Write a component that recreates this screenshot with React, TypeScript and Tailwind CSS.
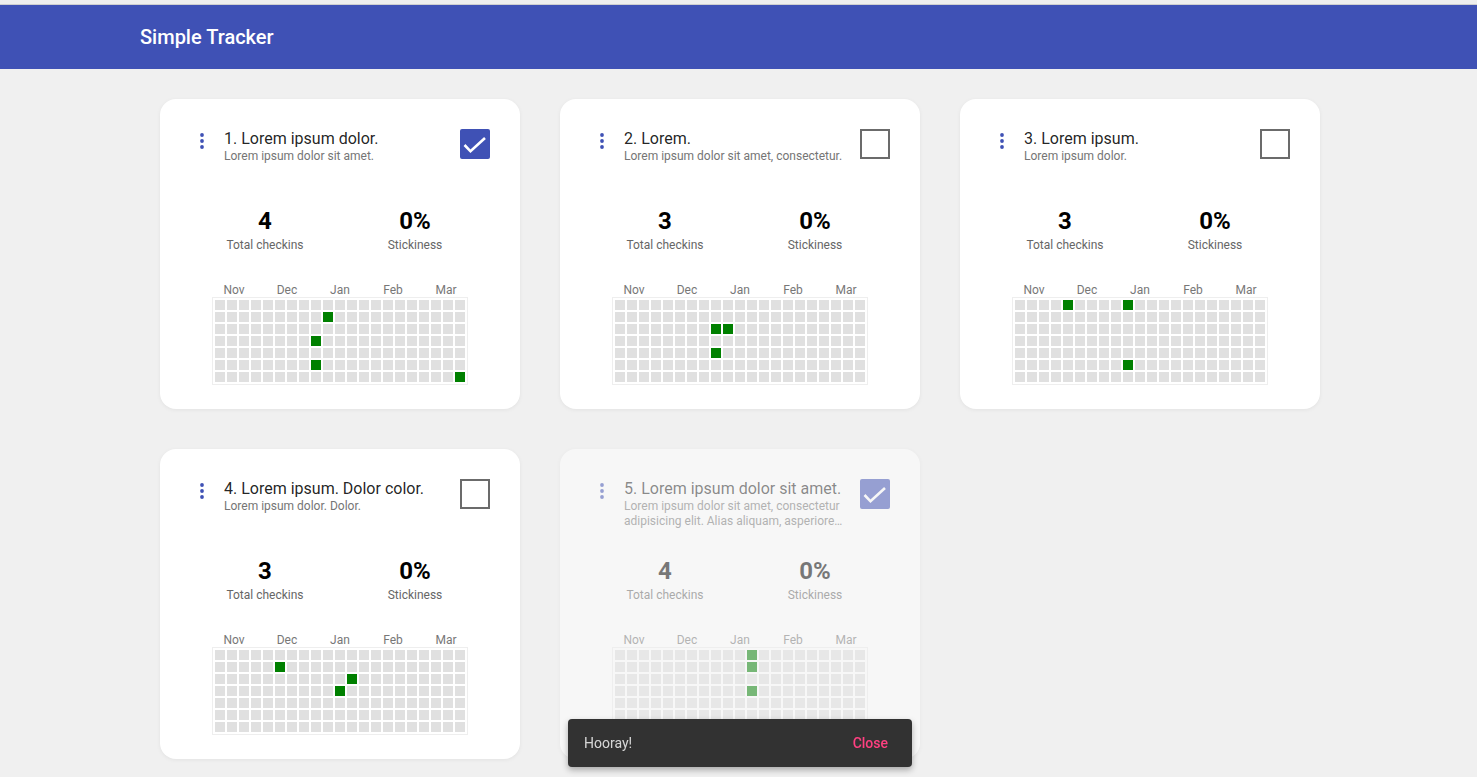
const font = { fontFamily: "Roboto, 'Noto Sans', sans-serif" };

type Habit = {
  id: number;
  title: string;
  subtitle: string;
  checked: boolean;
  total: number;
  stickiness: string;
  done: [number, number][];
  faded?: boolean;
};

const habits: Habit[] = [
  {
    id: 1,
    title: "1. Lorem ipsum dolor.",
    subtitle: "Lorem ipsum dolor sit amet.",
    checked: true,
    total: 4,
    stickiness: "0%",
    done: [
      [9, 1],
      [8, 3],
      [8, 5],
      [20, 6],
    ],
  },
  {
    id: 2,
    title: "2. Lorem.",
    subtitle: "Lorem ipsum dolor sit amet, consectetur.",
    checked: false,
    total: 3,
    stickiness: "0%",
    done: [
      [8, 2],
      [9, 2],
      [8, 4],
    ],
  },
  {
    id: 3,
    title: "3. Lorem ipsum.",
    subtitle: "Lorem ipsum dolor.",
    checked: false,
    total: 3,
    stickiness: "0%",
    done: [
      [4, 0],
      [9, 0],
      [9, 5],
    ],
  },
  {
    id: 4,
    title: "4. Lorem ipsum. Dolor color.",
    subtitle: "Lorem ipsum dolor. Dolor.",
    checked: false,
    total: 3,
    stickiness: "0%",
    done: [
      [5, 1],
      [11, 2],
      [10, 3],
    ],
  },
  {
    id: 5,
    title: "5. Lorem ipsum dolor sit amet.",
    subtitle:
      "Lorem ipsum dolor sit amet, consectetur adipisicing elit. Alias aliquam, asperiores commodi dolorum.",
    checked: true,
    total: 4,
    stickiness: "0%",
    faded: true,
    done: [
      [11, 0],
      [11, 1],
      [11, 3],
    ],
  },
];

const months = ["Nov", "Dec", "Jan", "Feb", "Mar"];

const MoreVert = () => (
  <svg width="8" height="24" viewBox="0 0 8 24" className="ml-[8px]">
    <circle cx="4" cy="6" r="1.9" fill="#3f51b5" />
    <circle cx="4" cy="12" r="1.9" fill="#3f51b5" />
    <circle cx="4" cy="18" r="1.9" fill="#3f51b5" />
  </svg>
);

const Checkbox = ({ checked }: { checked: boolean }) =>
  checked ? (
    <div className="h-[30px] w-[30px] shrink-0 rounded-[2px] bg-[#3f51b5]">
      <svg width="30" height="30" viewBox="0 0 30 30">
        <polyline
          points="4.5,16 10.5,22.3 25,9"
          fill="none"
          stroke="white"
          strokeWidth="2.6"
        />
      </svg>
    </div>
  ) : (
    <div className="h-[30px] w-[30px] shrink-0 border-2 border-[#6b6b6b]" />
  );

const Heatmap = ({ done }: { done: [number, number][] }) => {
  const cells = [];
  for (let c = 0; c < 21; c++) {
    for (let r = 0; r < 7; r++) {
      const on = done.some(([dc, dr]) => dc === c && dr === r);
      cells.push(
        <div
          key={`${c}-${r}`}
          className={on ? "h-[10px] w-[10px] bg-[#008000]" : "h-[10px] w-[10px] bg-[#e0e0e0]"}
        />
      );
    }
  }
  return (
    <div className="flex flex-col items-center">
      <div className="flex w-[256px] text-[12px] leading-[14px] text-[#777]">
        {months.map((m) => (
          <div key={m} className="w-[53px] shrink-0 text-center first:ml-[-4.5px]">
            {m}
          </div>
        ))}
      </div>
      <div className="border border-[#eeeeee] p-[2px]">
        <div className="grid grid-flow-col grid-rows-[repeat(7,10px)] auto-cols-[10px] gap-[2px]">
          {cells}
        </div>
      </div>
    </div>
  );
};

const HabitCard = ({ habit }: { habit: Habit }) => (
  <div
    className={`h-[310px] w-[360px] rounded-[16px] bg-white px-[30px] pt-[30px] shadow-[0_1px_4px_rgba(0,0,0,0.06)] ${
      habit.faded ? "opacity-50" : ""
    }`}
  >
    <div className="flex h-[60px] items-start">
      <div className="w-[34px] shrink-0">
        <MoreVert />
      </div>
      <div className="min-w-0 flex-1 pr-[14px]">
        <div className="text-[16px] leading-[20px] text-[rgba(0,0,0,0.87)]">{habit.title}</div>
        <div className="line-clamp-2 text-[12px] leading-[15px] text-[#757575]">
          {habit.subtitle}
        </div>
      </div>
      <Checkbox checked={habit.checked} />
    </div>
    <div className="mt-[18px] flex justify-center">
      <div className="w-[150px] text-center">
        <div className="text-[24px] font-bold leading-[28px] text-black">{habit.total}</div>
        <div className="mt-[3px] text-[12px] leading-[14px] text-[#666]">Total checkins</div>
      </div>
      <div className="w-[150px] text-center">
        <div className="text-[24px] font-bold leading-[28px] text-black">{habit.stickiness}</div>
        <div className="mt-[3px] text-[12px] leading-[14px] text-[#666]">Stickiness</div>
      </div>
    </div>
    <div className="mt-[31px]">
      <Heatmap done={habit.done} />
    </div>
  </div>
);

export default function App() {
  return (
    <div className="min-h-screen bg-[#f0f0f0]" style={font}>
      <div className="h-[5px] border-b border-[#cfcfcf] bg-[#eeeeee]" />
      <header className="flex h-[64px] items-center bg-[#3f51b5]">
        <div className="ml-[140px] text-[20px] font-medium text-white">Simple Tracker</div>
      </header>
      <main className="flex w-[1340px] flex-wrap gap-[40px] pb-[20px] pl-[160px] pt-[30px]">
        {habits.map((h) => (
          <HabitCard key={h.id} habit={h} />
        ))}
      </main>
      <div className="fixed bottom-[10px] left-[568px] flex h-[48px] w-[344px] items-center justify-between rounded-[4px] bg-[#323232] pl-[16px] pr-[24px] text-[14px] shadow-[0_3px_6px_rgba(0,0,0,0.3)]">
        <span className="text-[rgba(255,255,255,0.8)]">Hooray!</span>
        <span className="font-medium text-[#ff4081]">Close</span>
      </div>
    </div>
  );
}
